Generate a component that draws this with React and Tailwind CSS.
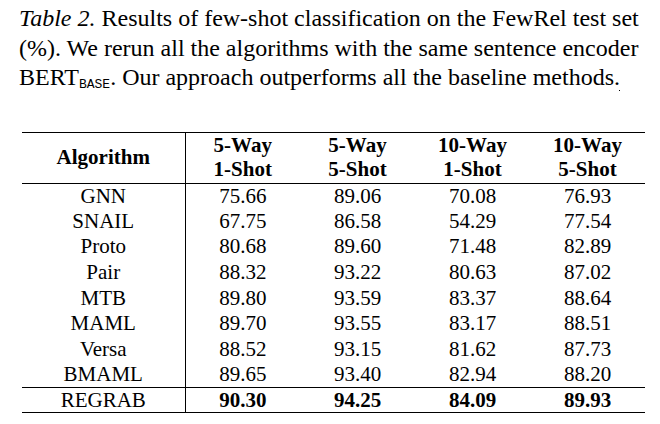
const rows = [
  ['GNN', '75.66', '89.06', '70.08', '76.93'],
  ['SNAIL', '67.75', '86.58', '54.29', '77.54'],
  ['Proto', '80.68', '89.60', '71.48', '82.89'],
  ['Pair', '88.32', '93.22', '80.63', '87.02'],
  ['MTB', '89.80', '93.59', '83.37', '88.64'],
  ['MAML', '89.70', '93.55', '83.17', '88.51'],
  ['Versa', '88.52', '93.15', '81.62', '87.73'],
  ['BMAML', '89.65', '93.40', '82.94', '88.20'],
]

const heads = [
  ['5-Way', '1-Shot'],
  ['5-Way', '5-Shot'],
  ['10-Way', '1-Shot'],
  ['10-Way', '5-Shot'],
]

export default function App() {
  return (
    <div className="w-[660px] h-[424px] bg-white text-black font-[Liberation_Serif,serif] relative overflow-hidden">
      <p className="pl-[19px] pt-[4px] text-[24px] leading-[29.5px] whitespace-nowrap">
        <i>Table 2.</i> Results of few-shot classification on the FewRel test set
        <br />
        (%). We rerun all the algorithms with the same sentence encoder
        <br />
        BERT
        <span className="font-[Liberation_Mono,monospace] text-[13px] relative top-[3px]">BASE</span>. Our approach outperforms all the baseline methods.
      </p>
      <span className="absolute left-[619px] top-[90px] w-px h-px bg-black" />

      <table className="ml-[22px] mt-[35px] border-collapse border-y border-black text-[21px] text-center">
        <thead>
          <tr className="border-b border-black h-[50px] font-bold leading-[24px]">
            <th className="w-[163px] border-r border-black pb-[2px]">Algorithm</th>
            {heads.map(([a, b]) => (
              <th key={a + b} className="w-[115px] pb-[2px]">
                {a}
                <br />
                {b}
              </th>
            ))}
          </tr>
        </thead>
        <tbody>
          {rows.map((r) => (
            <tr key={r[0]} className="h-[25.6px] leading-[23px]">
              <td className="border-r border-black">{r[0]}</td>
              {r.slice(1).map((v, i) => (
                <td key={i}>{v}</td>
              ))}
            </tr>
          ))}
          <tr className="h-[25px] leading-[23px] border-t border-black">
            <td className="border-r border-black">REGRAB</td>
            <td className="font-bold">90.30</td>
            <td className="font-bold">94.25</td>
            <td className="font-bold">84.09</td>
            <td className="font-bold">89.93</td>
          </tr>
        </tbody>
      </table>
    </div>
  )
}
